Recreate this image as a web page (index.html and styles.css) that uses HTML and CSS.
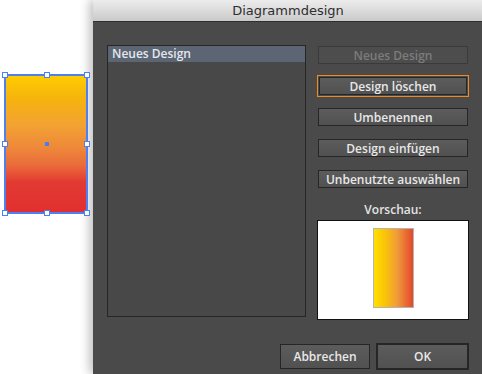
FILE: index.html
```html
<!DOCTYPE html>
<html lang="de">
<head>
<meta charset="utf-8">
<title>Diagrammdesign</title>
<link rel="stylesheet" href="styles.css">
</head>
<body>
<div class="screen">
  <div class="canvas">
    <div class="shape">
      <span class="handle h-tl"></span>
      <span class="handle h-tc"></span>
      <span class="handle h-tr"></span>
      <span class="handle h-ml"></span>
      <span class="handle h-mr"></span>
      <span class="handle h-bl"></span>
      <span class="handle h-bc"></span>
      <span class="handle h-br"></span>
      <span class="center-dot"></span>
    </div>
  </div>
  <div class="dialog">
    <div class="titlebar">Diagrammdesign</div>
    <div class="dialog-body">
      <div class="main">
        <div class="list">
          <div class="list-item selected">Neues Design</div>
        </div>
        <div class="side">
          <button class="btn disabled b1">Neues Design</button>
          <div class="focus-ring"><button class="btn">Design löschen</button></div>
          <button class="btn b3">Umbenennen</button>
          <button class="btn b4">Design einfügen</button>
          <button class="btn b5">Unbenutzte auswählen</button>
          <div class="preview-label">Vorschau:</div>
          <div class="preview">
            <div class="swatch"></div>
          </div>
        </div>
      </div>
      <div class="footer">
        <button class="btn big cancel">Abbrechen</button>
        <button class="btn big ok">OK</button>
      </div>
    </div>
  </div>
</div>
</body>
</html>
```
FILE: styles.css
```css
html, body {
  margin: 0;
  padding: 0;
  background: #ffffff;
  width: 482px;
  height: 374px;
  overflow: hidden;
}

.screen {
  display: flex;
  width: 482px;
  height: 374px;
}

.canvas {
  width: 93px;
  flex: none;
  padding: 74px 0 0 4px;
  box-sizing: border-box;
}

.shape {
  position: relative;
  width: 84px;
  height: 140px;
  box-sizing: border-box;
  border: 2px solid #4f7ff0;
  background: linear-gradient(to bottom,
    #ffcc00 0%,
    #f6b40c 16%,
    #f2a232 36%,
    #ee8a3a 52%,
    #ea6a3a 66%,
    #e23a32 78%,
    #e12f30 100%);
}

.handle {
  position: absolute;
  width: 4px;
  height: 4px;
  background: #ffffff;
  border: 1px solid #4f7ff0;
}
.h-tl { left: -4px; top: -4px; }
.h-tc { left: 38px; top: -4px; }
.h-tr { right: -4px; top: -4px; }
.h-ml { left: -4px; top: 65px; }
.h-mr { right: -4px; top: 65px; }
.h-bl { left: -4px; bottom: -4px; }
.h-bc { left: 38px; bottom: -4px; }
.h-br { right: -4px; bottom: -4px; }

.center-dot {
  position: absolute;
  left: 39px;
  top: 66px;
  width: 4px;
  height: 4px;
  background: #4a7cf6;
}

.dialog {
  flex: 1;
  display: flex;
  flex-direction: column;
  background: #4a4a4a;
  box-shadow: -3px 0 10px rgba(0, 0, 0, 0.28);
}

.titlebar {
  height: 22px;
  box-sizing: border-box;
  border-bottom: 1px solid #2e2e2e;
  background: linear-gradient(to bottom, #ececec 0%, #dadada 55%, #c9c9c9 100%);
  color: #2e2e2e;
  font-family: "DejaVu Sans", sans-serif;
  font-size: 13px;
  line-height: 22px;
  text-align: center;
}

.dialog-body {
  flex: 1;
  display: flex;
  flex-direction: column;
  padding: 23px 14px 0 14px;
}

.main {
  display: flex;
  gap: 11px;
}

.list {
  width: 199px;
  height: 272px;
  box-sizing: border-box;
  border: 1px solid #262626;
  background: #484848;
}

.list-item {
  height: 16px;
  padding-left: 4px;
  font-family: "Open Sans", sans-serif;
  font-weight: 600;
  font-size: 12px;
  line-height: 16px;
  color: #e4e8ee;
}
.list-item.selected {
  background: #5b6573;
}

.side {
  width: 152px;
  display: flex;
  flex-direction: column;
  align-items: center;
}

.btn {
  display: block;
  width: 150px;
  height: 18px;
  box-sizing: border-box;
  margin: 0;
  padding: 0;
  border: 1px solid #262626;
  background: linear-gradient(to bottom, #5c5c5c 0%, #515151 100%);
  color: #e8e8e8;
  font-family: "Open Sans", sans-serif;
  font-weight: 600;
  font-size: 12px;
  line-height: 15px;
  text-align: center;
}

.btn.disabled {
  background: #4d4d4d;
  border-color: #3a3a3a;
  color: #7c7c7c;
}

.b1 { margin-top: 1px; }

.focus-ring {
  margin-top: 11px;
  padding: 1px;
  border: 1px solid #f08a1c;
  width: 152px;
  box-sizing: border-box;
}
.focus-ring .btn {
  width: 148px;
}

.b3 { margin-top: 11px; }
.b4 { margin-top: 13px; }
.b5 { margin-top: 13px; }

.preview-label {
  margin-top: 13px;
  height: 17px;
  font-family: "Open Sans", sans-serif;
  font-weight: 600;
  font-size: 12px;
  line-height: 17px;
  color: #e4e4e4;
}

.preview {
  margin-top: 2px;
  width: 152px;
  height: 100px;
  box-sizing: border-box;
  border: 1px solid #111111;
  background: #ffffff;
  display: flex;
  justify-content: center;
  padding-top: 7px;
}

.swatch {
  width: 41px;
  height: 80px;
  box-sizing: border-box;
  border: 1px solid #b4b4b4;
  background: linear-gradient(to right, #ffe000 0%, #f9c20a 30%, #f09a3a 60%, #e4462e 100%);
}

.footer {
  display: flex;
  justify-content: flex-end;
  align-items: center;
  gap: 6px;
  margin-top: 23px;
}

.btn.big {
  height: 25px;
  font-size: 12px;
  line-height: 21px;
}

.btn.cancel {
  width: 90px;
}

.btn.ok {
  width: 93px;
  height: 27px;
  border: 2px solid #262626;
  line-height: 21px;
}
```
